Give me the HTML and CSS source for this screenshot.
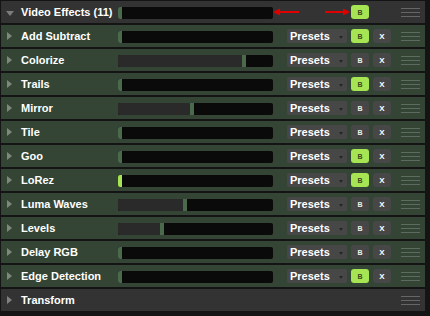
FILE: index.html
```html
<!DOCTYPE html>
<html>
<head>
<meta charset="utf-8">
<link rel="stylesheet" href="styles.css">
</head>
<body>
<div class="panel">
  <div class="row head">
    <span class="tri down"></span>
    <span class="label">Video Effects (11)</span>
    <div class="slider"><i class="fill" style="width:0px"></i><i class="knob"></i></div>
    <svg class="arrows" width="78" height="14" viewBox="0 0 78 14">
      <path d="M2 7 L26 7" stroke="#e00000" stroke-width="2"/>
      <path d="M0 7 L7 3.5 L7 10.5 Z" fill="#e00000"/>
      <path d="M52 7 L75 7" stroke="#e00000" stroke-width="2"/>
      <path d="M77 7 L70 3.5 L70 10.5 Z" fill="#e00000"/>
    </svg>
    <span class="btn b on">B</span>
    <span class="btn-gap"></span>
    <span class="grip"><i></i><i></i><i></i></span>
  </div>

  <div class="row fx">
    <span class="tri"></span><span class="label">Add Subtract</span>
    <div class="slider"><i class="fill" style="width:0px"></i><i class="knob"></i></div>
    <span class="presets">Presets<i class="caret"></i></span>
    <span class="btn b on">B</span><span class="btn x">X</span>
    <span class="grip"><i></i><i></i><i></i></span>
  </div>
  <div class="row fx">
    <span class="tri"></span><span class="label">Colorize</span>
    <div class="slider"><i class="fill" style="width:124px"></i><i class="knob"></i></div>
    <span class="presets">Presets<i class="caret"></i></span>
    <span class="btn b">B</span><span class="btn x">X</span>
    <span class="grip"><i></i><i></i><i></i></span>
  </div>
  <div class="row fx">
    <span class="tri"></span><span class="label">Trails</span>
    <div class="slider"><i class="fill" style="width:0px"></i><i class="knob"></i></div>
    <span class="presets">Presets<i class="caret"></i></span>
    <span class="btn b on">B</span><span class="btn x">X</span>
    <span class="grip"><i></i><i></i><i></i></span>
  </div>
  <div class="row fx">
    <span class="tri"></span><span class="label">Mirror</span>
    <div class="slider"><i class="fill" style="width:72px"></i><i class="knob"></i></div>
    <span class="presets">Presets<i class="caret"></i></span>
    <span class="btn b">B</span><span class="btn x">X</span>
    <span class="grip"><i></i><i></i><i></i></span>
  </div>
  <div class="row fx">
    <span class="tri"></span><span class="label">Tile</span>
    <div class="slider"><i class="fill" style="width:0px"></i><i class="knob"></i></div>
    <span class="presets">Presets<i class="caret"></i></span>
    <span class="btn b">B</span><span class="btn x">X</span>
    <span class="grip"><i></i><i></i><i></i></span>
  </div>
  <div class="row fx">
    <span class="tri"></span><span class="label">Goo</span>
    <div class="slider"><i class="fill" style="width:0px"></i><i class="knob"></i></div>
    <span class="presets">Presets<i class="caret"></i></span>
    <span class="btn b on">B</span><span class="btn x">X</span>
    <span class="grip"><i></i><i></i><i></i></span>
  </div>
  <div class="row fx">
    <span class="tri"></span><span class="label">LoRez</span>
    <div class="slider"><i class="fill" style="width:0px"></i><i class="knob hot"></i></div>
    <span class="presets">Presets<i class="caret"></i></span>
    <span class="btn b on">B</span><span class="btn x">X</span>
    <span class="grip"><i></i><i></i><i></i></span>
  </div>
  <div class="row fx">
    <span class="tri"></span><span class="label">Luma Waves</span>
    <div class="slider"><i class="fill" style="width:65px"></i><i class="knob"></i></div>
    <span class="presets">Presets<i class="caret"></i></span>
    <span class="btn b">B</span><span class="btn x">X</span>
    <span class="grip"><i></i><i></i><i></i></span>
  </div>
  <div class="row fx">
    <span class="tri"></span><span class="label">Levels</span>
    <div class="slider"><i class="fill" style="width:42px"></i><i class="knob"></i></div>
    <span class="presets">Presets<i class="caret"></i></span>
    <span class="btn b">B</span><span class="btn x">X</span>
    <span class="grip"><i></i><i></i><i></i></span>
  </div>
  <div class="row fx">
    <span class="tri"></span><span class="label">Delay RGB</span>
    <div class="slider"><i class="fill" style="width:0px"></i><i class="knob"></i></div>
    <span class="presets">Presets<i class="caret"></i></span>
    <span class="btn b">B</span><span class="btn x">X</span>
    <span class="grip"><i></i><i></i><i></i></span>
  </div>
  <div class="row fx">
    <span class="tri"></span><span class="label">Edge Detection</span>
    <div class="slider"><i class="fill" style="width:0px"></i><i class="knob"></i></div>
    <span class="presets">Presets<i class="caret"></i></span>
    <span class="btn b on">B</span><span class="btn x">X</span>
    <span class="grip"><i></i><i></i><i></i></span>
  </div>

  <div class="row head">
    <span class="tri"></span>
    <span class="label">Transform</span>
    <span class="flex"></span>
    <span class="grip"><i></i><i></i><i></i></span>
  </div>
</div>
</body>
</html>
```

FILE: styles.css
```css
html, body {
  margin: 0;
  padding: 0;
  background: #1c1c1c;
}
body {
  width: 430px;
  height: 316px;
  overflow: hidden;
  font-family: "Liberation Sans", Arial, sans-serif;
}
.panel {
  display: flex;
  flex-direction: column;
  gap: 2px;
  padding: 1px 5px 5px 1px;
  background: #141414;
  height: 316px;
  box-sizing: border-box;
}
.row {
  height: 22px;
  display: flex;
  align-items: center;
  flex-shrink: 0;
}
.head { background: #333333; }
.fx { background: #344535; }

.tri {
  width: 20px;
  height: 22px;
  flex-shrink: 0;
  display: flex;
  align-items: center;
  padding-left: 6px;
  box-sizing: border-box;
}
.tri::before {
  content: "";
  width: 0;
  height: 0;
  border-left: 5px solid #808080;
  border-top: 4px solid transparent;
  border-bottom: 4px solid transparent;
}
.fx .tri::before { border-left-color: #7d897d; }
.tri.down { padding-left: 5px; padding-top: 2px; }
.tri.down::before {
  border-left: 4px solid transparent;
  border-right: 4px solid transparent;
  border-top: 5px solid #7c7c7c;
  border-bottom: 0;
}
.label {
  width: 97px;
  flex-shrink: 0;
  color: #ffffff;
  font-weight: bold;
  font-size: 11px;
  white-space: nowrap;
  overflow: visible;
}
.slider {
  width: 155px;
  height: 12px;
  flex-shrink: 0;
  background: #0a0a0a;
  border-radius: 2px;
  display: flex;
  overflow: hidden;
  margin-top: 1px;
}
.slider .fill {
  background: #2a2a2a;
  height: 100%;
}
.slider .knob {
  width: 4px;
  height: 100%;
  background: #4b6a4c;
}
.slider .knob.hot { background: #a6e453; }

.arrows {
  flex-shrink: 0;
  display: block;
}
.presets {
  margin-left: 14px;
  width: 60px;
  height: 14px;
  box-sizing: border-box;
  background: #474747;
  border-radius: 2px;
  color: #ffffff;
  font-weight: bold;
  font-size: 11px;
  line-height: 14px;
  padding-left: 3px;
  display: flex;
  align-items: center;
  flex-shrink: 0;
}
.caret {
  margin-left: auto;
  margin-right: 4px;
  margin-top: 2px;
  width: 0;
  height: 0;
  border-left: 2px solid transparent;
  border-right: 2px solid transparent;
  border-top: 3px solid #262626;
}
.btn {
  width: 18px;
  height: 14px;
  border-radius: 3px;
  margin-left: 4px;
  flex-shrink: 0;
  display: flex;
  align-items: center;
  justify-content: center;
  font-weight: bold;
  font-size: 8px;
  background: #474747;
  color: #f0f0e0;
}
.btn.b { font-size: 7px; }
.btn.b.on {
  background: #a6e453;
  color: #3b4a20;
}
.btn.x { color: #ffffff; }
.btn-gap {
  width: 18px;
  margin-left: 4px;
  flex-shrink: 0;
}
.head .btn.b { margin-left: 0; }
.grip {
  margin-left: 10px;
  width: 19px;
  display: flex;
  flex-direction: column;
  gap: 3px;
  flex-shrink: 0;
}
.grip i {
  display: block;
  height: 1px;
  background: #666666;
}
.fx .grip i { background: #5e6c5f; }
.flex { flex: 1; }
.head .flex + .grip { margin-right: 5px; }
```
